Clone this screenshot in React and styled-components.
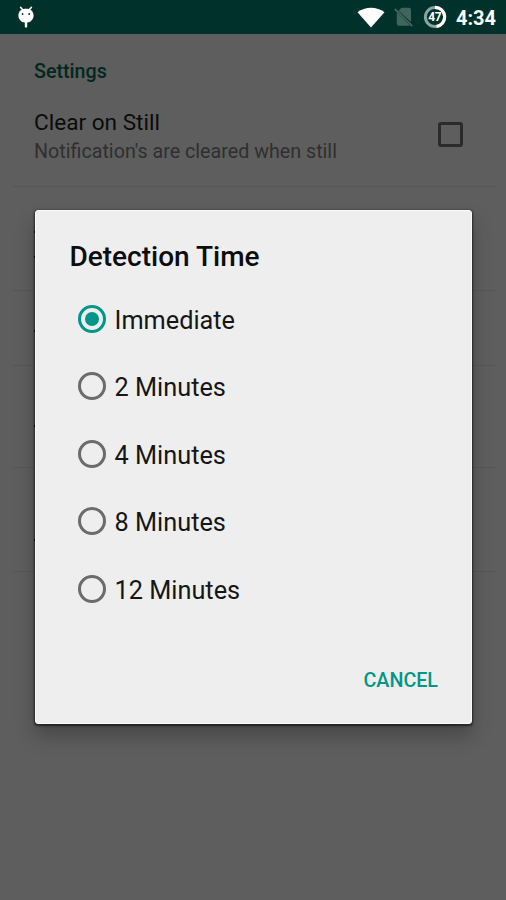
import React, { useState } from 'react';
import styled, { createGlobalStyle } from 'styled-components';

const OPTIONS = ['Immediate', '2 Minutes', '4 Minutes', '8 Minutes', '12 Minutes'];

// height of each preference row and where its text lines peek out
const ROWS = [
  { height: 104, marks: [46, 25] },
  { height: 75, marks: [41] },
  { height: 102, marks: [61] },
  { height: 104, marks: [73] },
];

const App = () => {
  const [selected, setSelected] = useState('Immediate');

  return (
    <>
      <GlobalStyle />
      <Screen>
        <StatusBar>
          <DebugIcon />
          <StatusIcons>
            <WifiIcon />
            <NoSimIcon />
            <BatteryIcon />
            <Clock>4:34</Clock>
          </StatusIcons>
        </StatusBar>

        <Preferences>
          <Category>Settings</Category>
          <Preference>
            <div>
              <PreferenceTitle>Clear on Still</PreferenceTitle>
              <Summary>Notification's are cleared when still</Summary>
            </div>
            <Checkbox />
          </Preference>
          {ROWS.map((row, i) => (
            <EmptyRow key={i} $height={row.height}>
              {row.marks.map((gap) => (
                <Mark key={gap} $gap={gap} />
              ))}
            </EmptyRow>
          ))}
        </Preferences>

        <Overlay>
          <Dialog role="dialog">
            <DialogTitle>Detection Time</DialogTitle>
            <Options>
              {OPTIONS.map((option) => (
                <Option key={option} onClick={() => setSelected(option)}>
                  <Radio $checked={option === selected} />
                  <OptionLabel>{option}</OptionLabel>
                </Option>
              ))}
            </Options>
            <Actions>
              <Button>CANCEL</Button>
            </Actions>
          </Dialog>
        </Overlay>
      </Screen>
    </>
  );
};

const DebugIcon = () => (
  <svg width="18" height="24" viewBox="0 0 18 24">
    <path d="M3.6 2.4L6 5M14.4 2.4L12 5" stroke="#fff" strokeWidth="1.6" strokeLinecap="round" />
    <path d="M9 3.8C4.4 3.8 1.4 6.4 1.4 10.4C1.4 14.2 4.2 17.2 7.8 17.5V21.6C7.8 23 10.2 23 10.2 21.6V17.5C13.8 17.2 16.6 14.2 16.6 10.4C16.6 6.4 13.6 3.8 9 3.8Z" fill="#fff" />
    <circle cx="5.6" cy="9" r="0.9" fill="#00312b" />
    <circle cx="12.2" cy="9" r="0.9" fill="#00312b" />
  </svg>
);

const WifiIcon = () => (
  <svg width="28" height="21" viewBox="0 0 28 21">
    <path d="M0.5 5.2C8 -0.9 20 -0.9 27.5 5.2L14 20.6Z" fill="#fff" />
  </svg>
);

const NoSimIcon = () => (
  <svg width="20" height="20" viewBox="0 0 20 20">
    <path d="M7.5 0.8H15Q17 0.8 17 2.8V15L4.5 3.8ZM2.8 5.5L16.2 18.8H4.8Q2.8 18.8 2.8 16.8Z" fill="#42645f" />
    <path d="M0.8 2L18.4 19.2" stroke="#42645f" strokeWidth="1.8" />
  </svg>
);

const BatteryIcon = () => (
  <svg width="24" height="24" viewBox="0 0 24 24">
    <circle cx="12" cy="12" r="9.6" fill="none" stroke="#8ba29e" strokeWidth="3" />
    <path d="M12 2.4A9.6 9.6 0 0 1 13.5 21.5" fill="none" stroke="#fff" strokeWidth="3.2" />
    <text x="11.7" y="16.3" textAnchor="middle" fontFamily="Roboto, sans-serif" fontSize="12" fontWeight="700" letterSpacing="-0.4" fill="#fff">47</text>
  </svg>
);

const GlobalStyle = createGlobalStyle`
  * {
    box-sizing: border-box;
  }

  body {
    margin: 0;
    background: #5e5e5e;
    font-family: Roboto, sans-serif;
  }
`;

const Screen = styled.div`
  position: relative;
  width: 506px;
  height: 900px;
  overflow: hidden;
  background: #5e5e5e;
`;

const StatusBar = styled.header`
  height: 34px;
  padding: 0 10px 0 17px;
  display: flex;
  align-items: center;
  justify-content: space-between;
  background: #00312b;
`;

const StatusIcons = styled.div`
  display: flex;
  align-items: center;

  svg {
    margin-right: 9px;
  }
`;

const Clock = styled.span`
  color: #fff;
  font-size: 20px;
  font-weight: 700;
  line-height: 34px;
  padding-top: 2px;
`;

const Preferences = styled.main`
  padding: 25px 10px 0 12px;
`;

const Category = styled.h2`
  margin: 0;
  padding-left: 22px;
  color: #03271f;
  font-size: 19.7px;
  font-weight: 500;
  line-height: 26px;
`;

const Preference = styled.div`
  height: 102px;
  padding: 24px 33px 0 22px;
  display: flex;
  justify-content: space-between;
  border-bottom: 1px solid #575757;
`;

const PreferenceTitle = styled.div`
  color: #0b0b0b;
  font-size: 22.6px;
  line-height: 28px;
`;

const Summary = styled.div`
  color: #2f2f2f;
  font-size: 19.7px;
  line-height: 29px;
`;

const Checkbox = styled.div`
  width: 25px;
  height: 25px;
  margin-top: 13px;
  border: 3px solid #2b2b2b;
  border-radius: 3px;
`;

const EmptyRow = styled.div`
  height: ${({ $height }) => $height}px;
  padding-left: 22px;
  overflow: hidden;
  border-bottom: 1px solid #575757;
`;

const Mark = styled.div`
  width: 2px;
  height: 2px;
  margin-top: ${({ $gap }) => $gap - 2}px;
  background: #0b0b0b;
`;

const Overlay = styled.div`
  position: absolute;
  inset: 0;
  padding: 210px 34px 0 35px;
`;

const Dialog = styled.section`
  height: 514px;
  display: flex;
  flex-direction: column;
  background: #eee;
  border: 1px solid #fafafa;
  border-radius: 3px;
  box-shadow: 0 1px 2px 1px rgba(0, 0, 0, 0.55), 0 12px 20px rgba(0, 0, 0, 0.25);
`;

const DialogTitle = styled.h1`
  margin: 0;
  padding: 29px 34px 0 33.5px;
  color: #0d0d0d;
  font-size: 28px;
  font-weight: 500;
  line-height: 34px;
`;

const Options = styled.div`
  padding: 11px 42px 0;
`;

const Option = styled.div`
  height: 67.5px;
  display: flex;
  align-items: center;
  gap: 8.5px;
  cursor: pointer;
`;

const OptionLabel = styled.span`
  padding-top: 3px;
  color: #161616;
  font-size: 25.3px;
`;

const Radio = styled.span`
  width: 28px;
  height: 28px;
  display: flex;
  align-items: center;
  justify-content: center;
  border: 3px solid ${({ $checked }) => ($checked ? '#009688' : '#6b6b6b')};
  border-radius: 50%;

  &::after {
    content: '';
    width: 14px;
    height: 14px;
    border-radius: 50%;
    background: ${({ $checked }) => ($checked ? '#009688' : 'transparent')};
  }
`;

const Actions = styled.footer`
  display: flex;
  justify-content: flex-end;
  margin-top: 45px;
  padding-right: 33px;
`;

const Button = styled.button`
  padding: 0;
  border: 0;
  background: none;
  color: #009688;
  font-family: inherit;
  font-size: 19.7px;
  font-weight: 500;
  line-height: 26px;
`;

export default App;
